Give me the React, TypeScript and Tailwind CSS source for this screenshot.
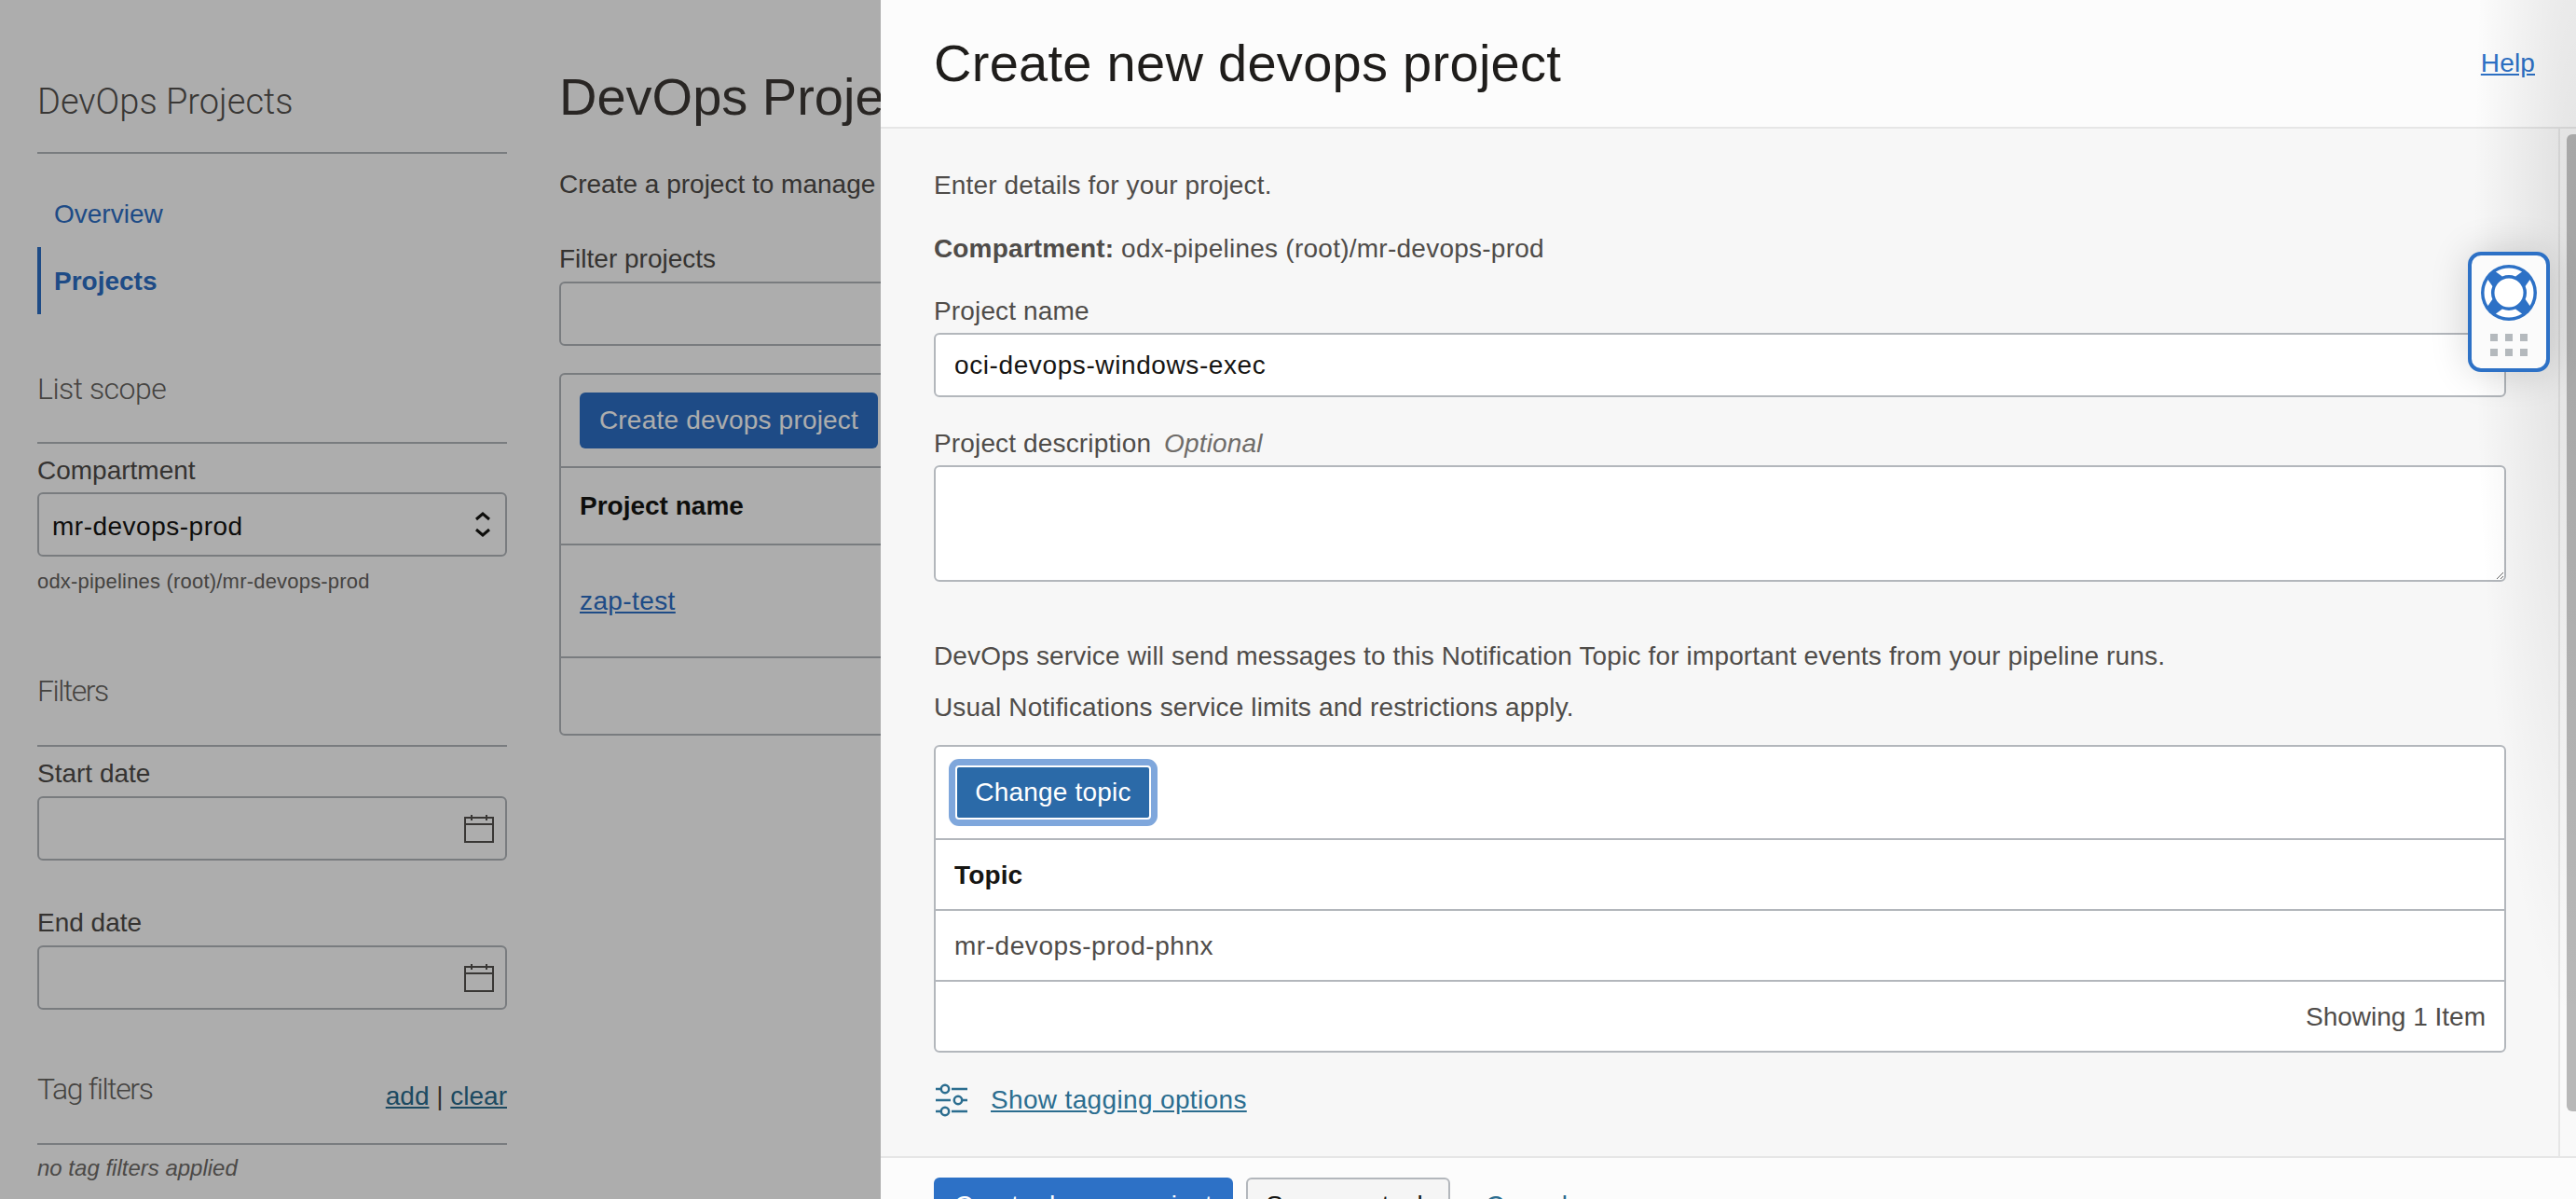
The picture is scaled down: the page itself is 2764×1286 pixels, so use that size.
const sans = "font-['Liberation_Sans',Arial,sans-serif]";

function CalendarIcon() {
  return (
    <svg width="32" height="30" viewBox="0 0 32 30" fill="none" stroke="#55524f" strokeWidth="2">
      <rect x="1" y="3" width="30" height="26" />
      <path d="M1 10h30M8 0v6M24 0v6" />
    </svg>
  );
}

function DateField({ label }: { label: string }) {
  return (
    <div>
      <div className="text-[28px] leading-[32px] text-[#4f4c49]">{label}</div>
      <div className="mt-2 flex h-[69px] items-center justify-end rounded-[6px] border-2 border-[#b3b7bc] pr-3">
        <CalendarIcon />
      </div>
    </div>
  );
}

function Sidebar() {
  return (
    <aside className="w-[504px] shrink-0">
      <h2 className="mt-[85px] border-b-2 border-[#b3b7bc] pb-[30px] font-['Roboto',sans-serif] font-light text-[38px] leading-[48px] text-[#55524f]">
        DevOps Projects
      </h2>
      <nav className="mt-[28px] text-[28px]">
        <div className="flex h-[72px] items-center pl-[18px] pt-[2px] text-[#2d6fc6]">Overview</div>
        <div className="flex h-[72px] items-center border-l-4 border-[#2d6fc6] pl-[14px] pt-[2px] font-bold text-[#2d6fc6]">Projects</div>
      </nav>
      <div className="mt-[60px] border-b-2 border-[#b3b7bc] pb-[37px]">
        <h3 className="font-['Roboto',sans-serif] text-[32px] font-light leading-[40px] tracking-[-0.5px] text-[#66635f]">List scope</h3>
      </div>
      <div className="mt-[13px] text-[28px] leading-[32px] text-[#4f4c49]">Compartment</div>
      <div className="mt-[7px] flex h-[69px] items-center justify-between rounded-[6px] border-2 border-[#b3b7bc] pl-[14px] pr-[15px] text-[28px] tracking-[0.5px] text-[#161513]">
        <span className="pt-[5px]">mr-devops-prod</span>
        <svg width="18" height="28" viewBox="0 0 18 28" fill="none" stroke="#161513" strokeWidth="3">
          <path d="M2 8l7-6 7 6M2 19l7 6 7-6" />
        </svg>
      </div>
      <div className="mt-[14px] text-[22px] leading-[26px] tracking-[0.2px] text-[#66635f]">odx-pipelines (root)/mr-devops-prod</div>
      <div className="mt-[84px] border-b-2 border-[#b3b7bc] pb-[38px]">
        <h3 className="font-['Roboto',sans-serif] text-[32px] font-light leading-[40px] tracking-[-1.5px] text-[#66635f]">Filters</h3>
      </div>
      <div className="mt-[13px] flex flex-col gap-[51px]">
        <DateField label="Start date" />
        <DateField label="End date" />
      </div>
      <div className="mt-[65px] flex items-start justify-between border-b-2 border-[#b3b7bc] pb-[34px]">
        <h3 className="font-['Roboto',sans-serif] text-[32px] font-light leading-[40px] tracking-[-1.4px] text-[#66635f]">Tag filters</h3>
        <div className="mt-[12px] text-[28px] leading-[32px] text-[#4f4c49]">
          <a className="text-[#2b6d8f] underline">add</a> | <a className="text-[#2b6d8f] underline">clear</a>
        </div>
      </div>
      <div className="mt-[11px] text-[24px] italic leading-[28px] text-[#6f6c69]">no tag filters applied</div>
    </aside>
  );
}

function MainColumn() {
  return (
    <main className="ml-[56px] h-[1286px] w-[345px] shrink-0 overflow-hidden">
      <div className="w-[1200px]">
        <h1 className="mt-[70px] text-[56px] leading-[68px] text-[#3d3936]">DevOps Projects</h1>
        <p className="mt-[42px] whitespace-nowrap text-[28px] leading-[36px] text-[#4f4c49]">Create a project to manage your pipelines and code repositories.</p>
        <div className="mt-[46px] text-[28px] leading-[32px] text-[#4f4c49]">Filter projects</div>
        <div className="mt-2 h-[69px] rounded-[6px] border-2 border-[#b3b7bc]" />
        <div className="mt-[29px] h-[389px] rounded-[6px] border-2 border-[#b3b7bc]">
          <div className="flex h-[100px] items-center border-b-2 border-[#b3b7bc] pl-[20px]">
            <div className="flex h-[60px] w-[320px] items-center justify-center rounded-[6px] bg-[#2d6fc6] text-[28px] tracking-[0.2px] text-white">Create devops project</div>
          </div>
          <div className="flex h-[83px] items-center border-b-2 border-[#b3b7bc] pl-[20px] text-[28px] font-bold text-[#161513]">Project name</div>
          <div className="flex h-[121px] items-center border-b-2 border-[#b3b7bc] pl-[20px] text-[28px] tracking-[0.4px] text-[#2d6fc6] underline">zap-test</div>
        </div>
      </div>
    </main>
  );
}

function LifeBuoy() {
  const gap = "M15.96 7.53A26.5 26.5 0 0 1 44.04 7.53L37.12 12.38A19 19 0 0 0 22.88 12.38Z";
  return (
    <svg width="60" height="60" viewBox="0 0 60 60">
      <circle cx="30" cy="30" r="30" fill="#2d71c6" />
      <circle cx="30" cy="30" r="15.5" fill="#fff" />
      {[0, 90, 180, 270].map((deg) => (
        <path key={deg} d={gap} fill="#fff" transform={`rotate(${deg} 30 30)`} />
      ))}
    </svg>
  );
}

function HelpWidget() {
  return (
    <div className="absolute left-[2648px] top-[270px] flex h-[129px] w-[88px] flex-col items-center rounded-[14px] border-[4px] border-[#2d71c6] bg-[#fbfbfb] pt-[10px] shadow-[0_0_40px_rgba(0,0,0,0.16)]">
      <LifeBuoy />
      <div className="mt-[14px] grid grid-cols-3 gap-2">
        {[0, 1, 2, 3, 4, 5].map((i) => (
          <span key={i} className="h-2 w-2 bg-[#b4b9bd]" />
        ))}
      </div>
    </div>
  );
}

function TopicTable() {
  return (
    <div className="mt-[22px] rounded-[6px] border-2 border-[#b3b7bc] bg-white">
      <div className="flex h-[100px] items-center border-b-2 border-[#b3b7bc] pl-[21px]">
        <button className="h-[58px] w-[210px] rounded-[4px] border-2 border-white bg-[#2b6aa8] text-[28px] tracking-[0.2px] text-white outline-[7px] outline-[#7fa7dc]">
          Change topic
        </button>
      </div>
      <div className="flex h-[76px] items-center border-b-2 border-[#b3b7bc] pl-[20px] pt-[2px] text-[28px] font-bold text-[#161513]">Topic</div>
      <div className="flex h-[76px] items-center border-b-2 border-[#b3b7bc] pl-[20px] pt-[2px] text-[28px] tracking-[0.55px] text-[#4f4c49]">mr-devops-prod-phnx</div>
      <div className="flex h-[74px] items-center justify-end pr-[20px] pt-[2px] text-[28px] tracking-normal text-[#4f4c49]">Showing 1 Item</div>
    </div>
  );
}

function Panel() {
  return (
    <section className="absolute bottom-0 left-[945px] right-0 top-0 flex flex-col overflow-hidden bg-[#f7f7f7] tracking-[0.15px]">
      <header className="flex h-[138px] shrink-0 items-center justify-between border-b-2 border-[#e6e6e6] bg-[#fcfcfc] pl-[57px] pr-[44px]">
        <h2 className="text-[56px] leading-[68px] tracking-[0.28px] text-[#1f1d1b]">Create new devops project</h2>
        <a className="text-[28px] text-[#2d71c6] underline">Help</a>
      </header>
      <div className="flex h-[1102px] shrink-0">
        <div className="w-[1802px] shrink-0 border-r-2 border-[#e6e6e6] pl-[57px] pr-[56px]">
          <p className="mt-[43px] text-[28px] leading-[36px] text-[#4f4c49]">Enter details for your project.</p>
          <p className="mt-[32px] text-[28px] leading-[36px] text-[#4f4c49]">
            <b>Compartment:</b> <span className="tracking-[0.25px]">odx-pipelines (root)/mr-devops-prod</span>
          </p>
          <div className="mt-[33px] text-[28px] leading-[32px] text-[#4f4c49]">Project name</div>
          <div className="mt-[7px] flex h-[69px] items-center rounded-[6px] border-2 border-[#b3b7bc] bg-white pl-[20px] text-[28px] tracking-[0.6px] text-[#161513]">oci-devops-windows-exec</div>
          <div className="mt-[34px] text-[28px] leading-[32px] text-[#4f4c49]">
            Project description <i className="ml-[6px] text-[#6f6c69]">Optional</i>
          </div>
          <textarea readOnly className="mt-[7px] block h-[125px] w-full resize rounded-[6px] border-2 border-[#b3b7bc] bg-white" />
          <p className="mt-[62px] text-[28px] leading-[36px] text-[#4f4c49]">DevOps service will send messages to this Notification Topic for important events from your pipeline runs.</p>
          <p className="mt-[19px] text-[28px] leading-[36px] text-[#4f4c49]">Usual Notifications service limits and restrictions apply.</p>
          <TopicTable />
          <div className="ml-[2px] mt-[30px] flex items-center gap-[25px]">
            <svg width="34" height="36" viewBox="0 0 34 36" fill="none" stroke="#2b6d8f" strokeWidth="2.5">
              <path d="M0 6h6M17 6h17M0 18h16M28 18h6M0 30h6M17 30h17" />
              <circle cx="10" cy="6" r="4.2" />
              <circle cx="24" cy="18" r="4.2" />
              <circle cx="10" cy="30" r="4.2" />
            </svg>
            <a className="text-[28px] tracking-[0.35px] text-[#2b6d8f] underline">Show tagging options</a>
          </div>
        </div>
        <div className="flex-1 bg-[#f9f9f9] pl-[7px] pt-[6px]">
          <div className="h-[1048px] w-[10px] rounded-l-[6px] bg-[#b8b8b8]" />
        </div>
      </div>
      <footer className="flex flex-1 items-start gap-[14px] border-t-2 border-[#e6e6e6] bg-[#fcfcfc] pl-[57px] pt-[21px] text-[28px]">
        <div className="flex h-[60px] w-[321px] shrink-0 items-center justify-center rounded-[6px] bg-[#2d71c6] text-white">Create devops project</div>
        <div className="flex h-[60px] w-[219px] shrink-0 items-center justify-center rounded-[6px] border-2 border-[#b3b7bc] bg-[#f5f5f5] text-[#161513]">Save as stack</div>
        <a className="ml-[24px] flex h-[60px] items-center text-[#2b6d8f]">Cancel</a>
      </footer>
      {/* soft shade along the right edge of the panel */}
      <div className="pointer-events-none absolute inset-0 bg-[radial-gradient(ellipse_110px_850px_at_100%_250px,rgba(0,0,0,0.1),transparent)]" />
    </section>
  );
}

export default function App() {
  return (
    <div className={`relative h-[1286px] w-[2764px] overflow-hidden bg-white ${sans}`}>
      <div className="flex pl-[40px]">
        <Sidebar />
        <MainColumn />
      </div>
      {/* dimmed backdrop behind the slide-in panel */}
      <div className="absolute inset-0 bg-black/[0.32]" />
      <Panel />
      <HelpWidget />
    </div>
  );
}
